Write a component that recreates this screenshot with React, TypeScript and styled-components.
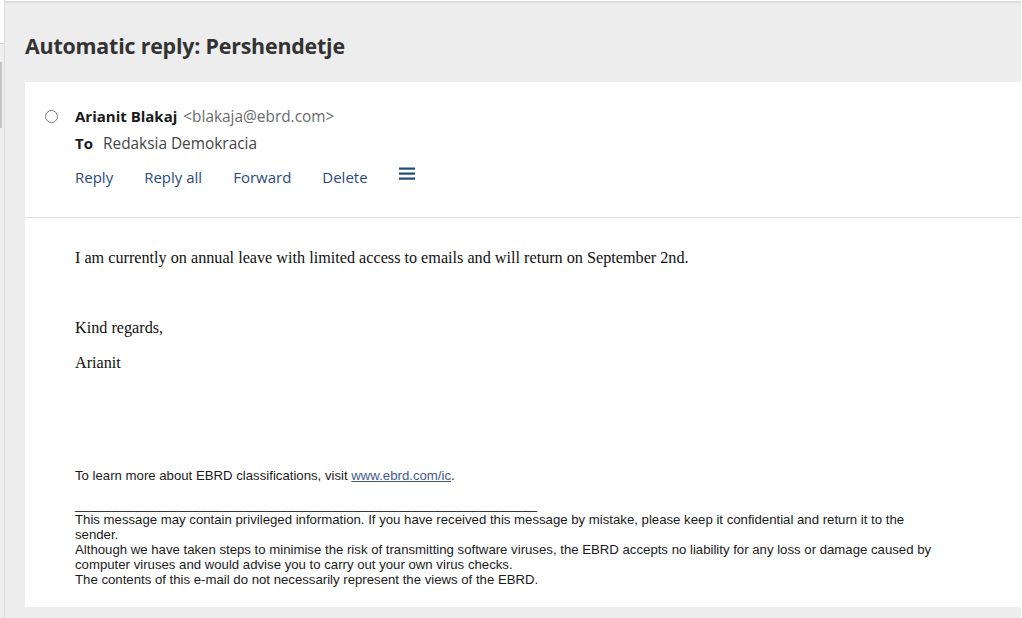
import styled, { createGlobalStyle } from "styled-components";

const GlobalStyle = createGlobalStyle`
    html, body {
        margin: 0;
        padding: 0;
        background: #ffffff;
    }
    #root {
        height: 100vh;
    }
`

const UI_FONT = `"Open Sans", "Noto Sans", "DejaVu Sans", sans-serif`;

const Page = styled.div`
    display: flex;
    height: 618px;
    width: 1022px;
    overflow: hidden;
    background: #ffffff;
`

const Rail = styled.aside`
    position: relative;
    width: 4px;
    border-right: 1px solid #dcdcdc;
    background: linear-gradient(#ffffff 0 43px, #d6d6d6 43px 44px, #efefef 44px);
`

const ScrollThumb = styled.div`
    position: absolute;
    left: 0;
    top: 62px;
    width: 2px;
    height: 66px;
    background: #c4c4c4;
`

const Main = styled.main`
    flex: 1;
    display: flex;
    flex-direction: column;
    margin-top: 1px;
    margin-right: 1px;
    border-top: 2px solid #dcdcdc;
    background: #ededed;
    padding-left: 20px;
`

const Title = styled.h1`
    margin: 0;
    height: 79px;
    display: flex;
    align-items: center;
    padding-top: 5px;
    box-sizing: border-box;
    font: 700 21.4px ${UI_FONT};
    color: #333333;
    letter-spacing: -0.2px;
`

const Card = styled.section`
    flex: 1;
    display: flex;
    flex-direction: column;
    background: #ffffff;
    margin-bottom: 11px;
`

const Header = styled.header`
    height: 136px;
    box-sizing: border-box;
    border-bottom: 1px solid #dedede;
    padding: 21px 0 0 20px;
`

const Row = styled.div`
    display: flex;
    align-items: baseline;
    height: 27px;
    line-height: 27px;
    font-family: ${UI_FONT};
`

const Radio = styled.span`
    align-self: center;
    width: 11px;
    height: 11px;
    border: 1px solid #7a7a7a;
    border-radius: 50%;
    margin-right: 17px;
`

const Indent = styled.div`
    padding-left: 30px;
`

const Strong = styled.span<{ $gap?: number }>`
    font-weight: 700;
    font-size: 15px;
    color: #1a1a1a;
    margin-right: ${(p) => p.$gap ?? 6}px;
`

const Muted = styled.span<{ $tone?: string }>`
    font-size: 15.4px;
    color: ${(p) => p.$tone ?? "#6a6a6a"};
`

const Actions = styled.nav`
    display: flex;
    align-items: center;
    gap: 31px;
    height: 40px;
`

const ActionLink = styled.a`
    font: 400 15px ${UI_FONT};
    color: #2b4b7c;
    text-decoration: none;
    cursor: pointer;
`

const MenuButton = styled.button`
    border: 0;
    background: none;
    padding: 0;
    margin-top: -6px;
    display: flex;
    cursor: pointer;
`

const Body = styled.article`
    padding: 31px 0 0 50px;
`

const Para = styled.p`
    margin: 0;
    height: 35px;
    font: 16.2px "Liberation Serif", "Times New Roman", serif;
    color: #111111;
`

const Spacer = styled.div<{ $h: number }>`
    height: ${(p) => p.$h}px;
`

const Small = styled.p`
    margin: 0;
    font: 13.2px/15px "Liberation Sans", Arial, sans-serif;
    color: #1a1a1a;
    white-space: nowrap;
`

const Link = styled.a`
    color: #3f5a8c;
    text-decoration: underline;
`

function MenuIcon() {
    return (
        <svg width="17" height="14" viewBox="0 0 17 14">
            <rect x="0" y="0.5" width="16" height="2.2" fill="#1f4a7a" />
            <rect x="0" y="5.5" width="16" height="2.2" fill="#1f4a7a" />
            <rect x="0" y="10.5" width="16" height="2.2" fill="#1f4a7a" />
        </svg>
    );
}

export default function App() {
    return (
        <>
            <GlobalStyle />
            <Page>
                <Rail>
                    <ScrollThumb />
                </Rail>
                <Main>
                    <Title>Automatic reply: Pershendetje</Title>
                    <Card>
                        <Header>
                            <Row>
                                <Radio />
                                <Strong>Arianit Blakaj</Strong>
                                <Muted>&lt;blakaja@ebrd.com&gt;</Muted>
                            </Row>
                            <Indent>
                                <Row>
                                    <Strong $gap={10}>To</Strong>
                                    <Muted $tone="#444444">Redaksia Demokracia</Muted>
                                </Row>
                                <Actions>
                                    <ActionLink>Reply</ActionLink>
                                    <ActionLink>Reply all</ActionLink>
                                    <ActionLink>Forward</ActionLink>
                                    <ActionLink>Delete</ActionLink>
                                    <MenuButton aria-label="More actions">
                                        <MenuIcon />
                                    </MenuButton>
                                </Actions>
                            </Indent>
                        </Header>
                        <Body>
                            <Para>I am currently on annual leave with limited access to emails and will return on September 2nd.</Para>
                            <Para>&nbsp;</Para>
                            <Para>Kind regards,</Para>
                            <Para>Arianit</Para>
                            <Spacer $h={79} />
                            <Small>
                                To learn more about EBRD classifications, visit <Link>www.ebrd.com/ic</Link>.
                            </Small>
                            <Spacer $h={14} />
                            <Small>_______________________________________________________________</Small>
                            <Small>
                                This message may contain privileged information. If you have received this message by mistake, please keep it confidential and return it to the
                                <br />
                                sender.
                                <br />
                                Although we have taken steps to minimise the risk of transmitting software viruses, the EBRD accepts no liability for any loss or damage caused by
                                <br />
                                computer viruses and would advise you to carry out your own virus checks.
                                <br />
                                The contents of this e-mail do not necessarily represent the views of the EBRD.
                            </Small>
                        </Body>
                    </Card>
                </Main>
            </Page>
        </>
    );
}
